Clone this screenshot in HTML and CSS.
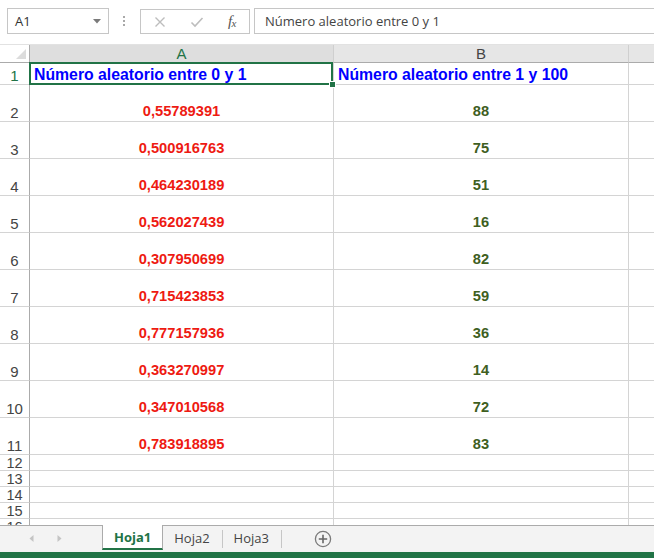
FILE: index.html
```html
<!DOCTYPE html>
<html lang="es">
<head>
<meta charset="utf-8">
<title>Hoja1</title>
<link rel="stylesheet" href="styles.css">
</head>
<body>
<div class="app">
  <div class="toolbar">
    <div class="namebox">
      <span class="nb-text">A1</span>
      <svg class="nb-arrow" width="8" height="5" viewBox="0 0 8 5"><polygon points="0,0 8,0 4,4.5" fill="#7a7a7a"/></svg>
    </div>
    <div class="dots"><i></i><i></i><i></i></div>
    <div class="fxbtns">
      <svg class="ico" width="12" height="12" viewBox="0 0 12 12"><path d="M1.5 1.5 L10.5 10.5 M10.5 1.5 L1.5 10.5" stroke="#bdbdbd" stroke-width="1.4" fill="none"/></svg>
      <svg class="ico" width="14" height="12" viewBox="0 0 14 12"><path d="M1.5 6.5 L5 10 L12.5 2" stroke="#bdbdbd" stroke-width="1.6" fill="none"/></svg>
      <span class="fx">f<sub>x</sub></span>
    </div>
    <div class="formula">Número aleatorio entre 0 y 1</div>
  </div>

  <div class="sheet">
    <div class="corner"><span class="tri"></span></div>
    <div class="ch ch-sel">A</div>
    <div class="ch">B</div>
    <div class="ch ch-last"></div>

    <div class="rh rh-sel">1</div>
    <div class="c c-title c-active">Número aleatorio entre 0 y 1<span class="sel"><span class="handle"></span></span></div>
    <div class="c c-title">Número aleatorio entre 1 y 100</div>
    <div class="c c-last"></div>

    <div class="rh">2</div><div class="c c-red">0,55789391</div><div class="c c-green">88</div><div class="c c-last"></div>
    <div class="rh">3</div><div class="c c-red">0,500916763</div><div class="c c-green">75</div><div class="c c-last"></div>
    <div class="rh">4</div><div class="c c-red">0,464230189</div><div class="c c-green">51</div><div class="c c-last"></div>
    <div class="rh">5</div><div class="c c-red">0,562027439</div><div class="c c-green">16</div><div class="c c-last"></div>
    <div class="rh">6</div><div class="c c-red">0,307950699</div><div class="c c-green">82</div><div class="c c-last"></div>
    <div class="rh">7</div><div class="c c-red">0,715423853</div><div class="c c-green">59</div><div class="c c-last"></div>
    <div class="rh">8</div><div class="c c-red">0,777157936</div><div class="c c-green">36</div><div class="c c-last"></div>
    <div class="rh">9</div><div class="c c-red">0,363270997</div><div class="c c-green">14</div><div class="c c-last"></div>
    <div class="rh">10</div><div class="c c-red">0,347010568</div><div class="c c-green">72</div><div class="c c-last"></div>
    <div class="rh">11</div><div class="c c-red">0,783918895</div><div class="c c-green">83</div><div class="c c-last"></div>

    <div class="rh rh-s">12</div><div class="c"></div><div class="c"></div><div class="c c-last"></div>
    <div class="rh rh-s">13</div><div class="c"></div><div class="c"></div><div class="c c-last"></div>
    <div class="rh rh-s">14</div><div class="c"></div><div class="c"></div><div class="c c-last"></div>
    <div class="rh rh-s">15</div><div class="c"></div><div class="c"></div><div class="c c-last"></div>
    <div class="rh rh-s">16</div><div class="c"></div><div class="c"></div><div class="c c-last"></div>
  </div>

  <div class="tabs">
    <div class="nav">
      <svg width="5" height="7" viewBox="0 0 5 7"><polygon points="4.5,0 4.5,7 0.5,3.5" fill="#c4c4c4"/></svg>
      <svg width="5" height="7" viewBox="0 0 5 7"><polygon points="0.5,0 0.5,7 4.5,3.5" fill="#c4c4c4"/></svg>
    </div>
    <div class="tab tab-active">Hoja1</div>
    <div class="tab">Hoja2</div>
    <div class="tab">Hoja3</div>
    <svg class="add" width="18" height="18" viewBox="0 0 18 18"><circle cx="9" cy="9" r="7.6" stroke="#7a7a7a" stroke-width="1.3" fill="none"/><path d="M9 4.8 V13.2 M4.8 9 H13.2" stroke="#666" stroke-width="1.6"/></svg>
  </div>
  <div class="status"></div>
</div>
</body>
</html>
```

FILE: styles.css
```css
* { box-sizing: border-box; }
html, body { margin: 0; padding: 0; background: #fff; }
.app {
  width: 654px;
  height: 558px;
  overflow: hidden;
  display: flex;
  flex-direction: column;
  font-family: "Liberation Sans", Arial, sans-serif;
}

/* ---------- toolbar ---------- */
.toolbar {
  height: 44px;
  flex: none;
  display: flex;
  align-items: flex-start;
  padding: 8px 0 0 7px;
  font-family: "Open Sans", "Noto Sans", sans-serif;
  font-size: 13px;
  color: #444;
}
.namebox {
  width: 102px;
  height: 26px;
  border: 1px solid #c6c6c6;
  display: flex;
  align-items: center;
  justify-content: space-between;
  padding: 0 7px 1px 7px;
}
.nb-text { color: #333; }
.nb-arrow { margin-top: 1px; }
.dots {
  width: 3px;
  margin: 8px 0 0 14px;
  display: flex;
  flex-direction: column;
  gap: 2px;
}
.dots i { display: block; width: 2px; height: 2px; background: #a9a9a9; }
.fxbtns {
  width: 110px;
  height: 25px;
  margin: 1px 0 0 14px;
  border: 1px solid #c6c6c6;
  display: flex;
  align-items: center;
  padding: 0 13px 0 13px;
  justify-content: space-between;
}
.fx {
  font-family: "Liberation Serif", "DejaVu Serif", serif;
  font-style: italic;
  font-size: 15px;
  color: #555;
  letter-spacing: -0.5px;
}
.fx sub { font-size: 11px; vertical-align: -1px; }
.formula {
  flex: 1;
  height: 26px;
  margin-left: 4px;
  border: 1px solid #c6c6c6;
  border-right: none;
  padding: 2px 0 0 10px;
  line-height: 20px;
  color: #444;
}

/* ---------- sheet ---------- */
.sheet {
  height: 481px;
  flex: none;
  overflow: hidden;
  display: grid;
  grid-template-columns: 30px 304px 295px 1fr;
  grid-template-rows: 18px 22px repeat(10, 37px) repeat(5, 16px);
  border-top: 1px solid #e2e2e2;
}
.corner {
  position: relative;
  background: #fff;
  border-right: 1px solid #ababab;
  border-bottom: 1px solid #ababab;
}
.tri {
  position: absolute;
  right: 3px;
  bottom: 3px;
  width: 0;
  height: 0;
  border-left: 10px solid transparent;
  border-bottom: 10px solid #dcdcdc;
}
.ch {
  background: #e6e6e6;
  border-right: 1px solid #cfcfcf;
  border-bottom: 1px solid #ababab;
  display: flex;
  align-items: center;
  justify-content: center;
  font-size: 15px;
  line-height: 17px;
  color: #444;
}
.ch-sel { background: #dedede; color: #217346; }
.ch-last { border-right: none; }
.rh {
  border-right: 1px solid #ababab;
  border-bottom: 1px solid #d4d4d4;
  display: flex;
  align-items: flex-end;
  justify-content: center;
  padding-bottom: 1px;
  font-size: 15px;
  line-height: 15px;
  color: #444;
}
.rh-s { padding-bottom: 0; line-height: 14px; font-size: 14.5px; }
.rh-sel { color: #217346; }
.c {
  border-right: 1px solid #d4d4d4;
  border-bottom: 1px solid #d4d4d4;
  display: flex;
  align-items: flex-end;
  justify-content: center;
  font-size: 14.67px;
  font-weight: bold;
  line-height: 17px;
  padding-bottom: 1px;
  white-space: nowrap;
}
.c-last { border-right: none; }
.c-title {
  justify-content: flex-start;
  padding-left: 4px;
  padding-bottom: 1px;
  color: #0000ff;
  font-size: 15.8px;
}
.c-red { color: #ee1a12; }
.c-green { color: #3f5f1f; }
.c-active { position: relative; overflow: visible; }
.sel {
  position: absolute;
  left: -1px;
  top: -1px;
  right: 0;
  bottom: -1px;
  border: 2px solid #217346;
  z-index: 2;
}
.handle {
  position: absolute;
  right: -5px;
  bottom: -5px;
  width: 7px;
  height: 7px;
  background: #217346;
  border: 1px solid #fff;
}

/* ---------- tabs ---------- */
.tabs {
  height: 27px;
  flex: none;
  background: #f3f3f3;
  border-top: 1px solid #ababab;
  display: flex;
  align-items: stretch;
  font-family: "Open Sans", "Noto Sans", sans-serif;
  font-size: 13px;
  color: #444;
}
.nav {
  width: 102px;
  display: flex;
  align-items: center;
  padding: 0 0 1px 29px;
  gap: 23px;
}
.tab {
  display: flex;
  align-items: center;
  padding: 0 12px 2px 11px;
  margin: 4px 0 4px 0;
  border-right: 1px solid #c6c6c6;
  line-height: 18px;
}
.tab-active {
  margin: -1px 0 2px 0;
  padding: 1px 11px 0 11px;
  background: #fff;
  border-left: 1px solid #ababab;
  border-right: 1px solid #ababab;
  border-bottom: 2px solid #217346;
  color: #217346;
  font-weight: bold;
}
.add { align-self: center; margin-left: 32px; }
.status {
  height: 6px;
  flex: none;
  background: #217346;
}
```
